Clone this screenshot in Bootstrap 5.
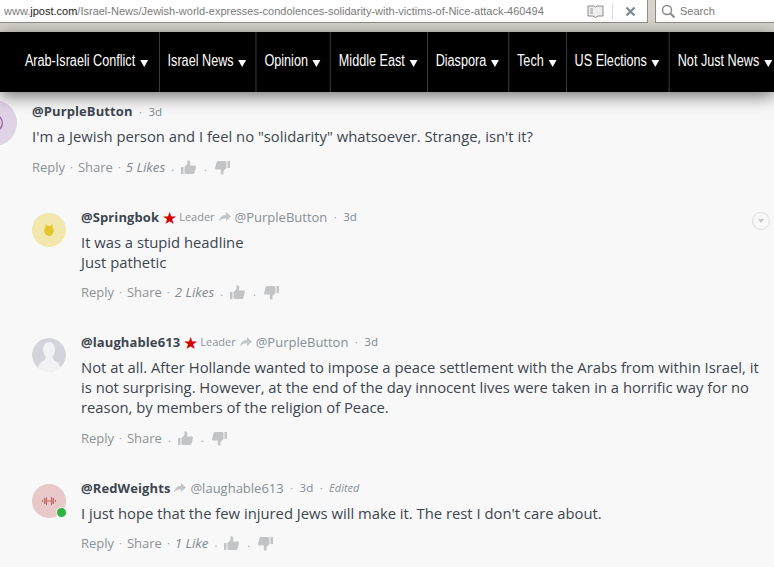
<!DOCTYPE html>
<html lang="en">
<head>
    <meta charset="UTF-8">
    <meta name="viewport" content="width=device-width, initial-scale=1.0">
    <title>Comments</title>
    <link href="https://cdn.jsdelivr.net/npm/bootstrap@5.3.2/dist/css/bootstrap.min.css" rel="stylesheet">
    <style>
        html, body { height: 567px; overflow: hidden; }
        body { background-color: #f8f8f8; font-family: "Open Sans", "Liberation Sans", sans-serif; color: #3c4650; }
        /* browser chrome */
        .chrome-bar { height: 32px; background-color: #d7d3cb; font-family: "Liberation Sans", sans-serif; font-size: 11px; color: #7b7b7b; }
        .url-box { width: 648px; height: 23px; background: #fff; border: 1px solid #8e8e8e; border-width: 0 1px 1px 0; padding-left: 4px; }
        .url-text { font-size: 11px; white-space: nowrap; }
        .url-text b { color: #222; font-weight: 400; }
        .url-sep { width: 1px; height: 16px; background: #dcdcdc; }
        .find-box { flex: 1; height: 23px; margin-left: 7px; background: #fff; border: 1px solid #8e8e8e; border-width: 0 0 1px 1px; padding-left: 5px; }
        /* site nav, no narrow face is installed so the row is squeezed as a whole */
        .site-nav { height: 60px; background: #000; padding-left: 17px; box-shadow: 0 4px 16px rgba(0,0,0,.55); position: relative; z-index: 2; overflow: hidden; }
        .site-row { height: 100%; width: 127%; flex: none; transform: scaleX(.79); transform-origin: left center; }
        .site-link { display: flex; align-items: center; height: 100%; padding: 0 12px 3px 10px; border-right: 1px solid #4a4a4a; color: #fff; text-decoration: none; font-family: "Liberation Sans", sans-serif; font-size: 16px; white-space: nowrap; }
        .site-link:first-child { padding-right: 14px; }
        .site-link:last-child { border-right: 0; }
        .site-link .caret-down { width: 0; height: 0; margin: 5px 0 0 6px; border-left: 5px solid transparent; border-right: 5px solid transparent; border-top: 7px solid #fff; }
        /* comments */
        .thread { padding-top: 9px; }
        .cmt { padding-left: 32px; padding-right: 4px; padding-bottom: 30px; }
        .cmt-top { padding-left: 0; }
        .cmt-top .cmt-actions { margin-top: 11px; }
        .cmt-long .cmt-actions { margin-top: 11px; }
        .avatar-round { width: 34px; height: 34px; border-radius: 50%; flex: none; margin-top: 6px; margin-right: 15px; position: relative; }
        .avatar-big { width: 46px; height: 46px; margin: -1px 15px 0 -29px; background: #e0d3e6; }
        .avatar-yellow { background: #f2e8ae; }
        .avatar-grey { overflow: hidden; }
        .avatar-red { background: #e8c8c8; }
        .online-dot { position: absolute; right: -1px; bottom: 0; width: 9px; height: 9px; border-radius: 50%; background: #33b13f; border: 1px solid #f8f8f8; box-sizing: content-box; }
        .cmt-head { height: 20px; line-height: 20px; font-size: 12px; color: #8a949c; white-space: nowrap; }
        .cmt-name { font-size: 13px; font-weight: 700; color: #3c4650; letter-spacing: .1px; }
        .cmt-parent { font-size: 13px; color: #858f96; }
        .cmt-leader { font-size: 11px; color: #8a9299; }
        .cmt-time { font-size: 11.5px; color: #7c8a96; }
        .cmt-edited { font-size: 11px; font-style: italic; color: #8a9299; }
        .cmt-star { color: #d40000; font-size: 17px; line-height: 1; margin: 0 2px 0 3px; }
        .cmt-body { margin-top: 5px; font-size: 14.8px; line-height: 20px; color: #3c4650; }
        .cmt-actions { margin-top: 10px; height: 20px; line-height: 20px; font-size: 13px; color: #8d9297; white-space: nowrap; }
        .cmt-likes { font-style: italic; color: #7f8a92; font-size: 13.3px; }
        .dot-sep { color: #9aa2a8; margin: 0 5px; font-size: 11px; }
        .cmt-head .dot-sep { margin: 0 6.5px; }
        .vote-sep { color: #9aa2a8; margin: 0 8px; font-size: 11px; }
        .vote-first { margin: 0 7px 0 6px; }
        .vote-icon { fill: #c2c4c6; }
        .collapse-btn { width: 18px; height: 18px; border: 1px solid #dedede; border-radius: 50%; margin: 5px 0 0 -18px; flex: none; display: flex; align-items: center; justify-content: center; }
        .collapse-btn span { width: 0; height: 0; border-left: 3.5px solid transparent; border-right: 3.5px solid transparent; border-top: 4px solid #c8c8c8; }
    </style>
</head>
<body>
    <div class="chrome-bar d-flex align-items-start">
        <div class="url-box d-flex align-items-center">
            <span class="url-text flex-grow-1">www.<b>jpost.com</b>/Israel-News/Jewish-world-expresses-condolences-solidarity-with-victims-of-Nice-attack-460494</span>
            <svg width="17" height="13" viewBox="0 0 17 13" class="me-2"><path d="M1 1h6l1.500 1L10 1h6v10h-5l-2.500 1.500L6 11H1z" fill="#eee" stroke="#8a8a8a"/><path d="M3 4h3M3 6h3M3 8h3" stroke="#9a9a9a"/></svg>
            <span class="url-sep"></span>
            <svg width="11" height="11" viewBox="0 0 11 11" style="margin:0 11px 0 12px"><path d="M1.500 1.500l8 8M9.500 1.500l-8 8" stroke="#7d8994" stroke-width="2.200"/></svg>
        </div>
        <div class="find-box d-flex align-items-center gap-1">
            <svg width="15" height="15" viewBox="0 0 15 15"><circle cx="6" cy="6" r="4.500" fill="#fff" stroke="#8a8a8a" stroke-width="1.500"/><path d="M9.500 9.500l4 4" stroke="#8a8a8a" stroke-width="2"/></svg>
            <span class="url-text">Search</span>
        </div>
    </div>

    <nav class="site-nav d-flex">
        <div class="site-row d-flex">
            <a class="site-link" href="#">Arab-Israeli Conflict<span class="caret-down"></span></a>
            <a class="site-link" href="#">Israel News<span class="caret-down"></span></a>
            <a class="site-link" href="#">Opinion<span class="caret-down"></span></a>
            <a class="site-link" href="#">Middle East<span class="caret-down"></span></a>
            <a class="site-link" href="#">Diaspora<span class="caret-down"></span></a>
            <a class="site-link" href="#">Tech<span class="caret-down"></span></a>
            <a class="site-link" href="#">US Elections<span class="caret-down"></span></a>
            <a class="site-link" href="#">Not Just News<span class="caret-down"></span></a>
        </div>
    </nav>

    <svg width="0" height="0" class="position-absolute">
        <symbol id="thumb-up" viewBox="0 0 15 15"><path d="M0 7h2.500v7H0zM3.500 7l3-3V.5c1.700-.6 3 .5 2.800 2.300L9 5.500h4.800c1 0 1.400 1 1.100 1.800l-1.500 5.700c-.2.600-.7 1-1.400 1H5.500c-1 0-2-.5-2-1z"/></symbol>
        <symbol id="thumb-down" viewBox="0 0 15 15"><path d="M15 8h-2.500V1H15zM11.500 8l-3 3v3.500c-1.700.6-3-.5-2.800-2.300L6 9.500H1.200c-1 0-1.400-1-1.100-1.800L1.600 2C1.800 1.400 2.300 1 3 1h6.500c1 0 2 .5 2 1z"/></symbol>
        <symbol id="reply-arrow" viewBox="0 0 12 10"><path d="M7 0l5 4.500L7 9V6.200C4 6.200 2 7 0 9.500 .7 5.500 3 3 7 2.800z" fill="#c3c6c9"/></symbol>
    </svg>

    <main class="thread">
        <div class="cmt cmt-top d-flex">
            <div class="avatar-round avatar-big d-flex align-items-center justify-content-center">
                <svg width="20" height="20" viewBox="0 0 24 24"><circle cx="12" cy="12" r="10" fill="none" stroke="#9a78ae" stroke-width="2"/><circle cx="12" cy="12" r="6" fill="#a98abb" stroke="#8e6aa3"/></svg>
            </div>
            <div class="flex-grow-1">
                <div class="cmt-head"><span class="cmt-name">@PurpleButton</span><span class="dot-sep">·</span><span class="cmt-time">3d</span></div>
                <div class="cmt-body">I'm a Jewish person and I feel no "solidarity" whatsoever. Strange, isn't it?</div>
                <div class="cmt-actions d-flex align-items-center">Reply<span class="dot-sep">·</span>Share<span class="dot-sep">·</span><span class="cmt-likes">5 Likes</span><span class="vote-sep vote-first">.</span><svg class="vote-icon" width="15" height="15"><use href="#thumb-up"/></svg><span class="vote-sep">.</span><svg class="vote-icon" width="15" height="15"><use href="#thumb-down"/></svg></div>
            </div>
        </div>

        <div class="cmt d-flex">
            <div class="avatar-round avatar-yellow d-flex align-items-center justify-content-center">
                <svg width="12" height="14" viewBox="0 0 12 14"><path d="M2.500 1l2 2h3l2-2v3.500c2 1.500 1.500 5-.5 7l-3 2-3-2C1 9.500.5 6 2.500 4.500z" fill="#e2c62c"/></svg>
            </div>
            <div class="flex-grow-1">
                <div class="cmt-head d-flex align-items-center"><span class="cmt-name">@Springbok</span><span class="cmt-star">★</span><span class="cmt-leader">Leader</span><svg class="mx-1" width="12" height="10"><use href="#reply-arrow"/></svg><span class="cmt-parent">@PurpleButton</span><span class="dot-sep">·</span><span class="cmt-time">3d</span></div>
                <div class="cmt-body">It was a stupid headline<br>Just pathetic</div>
                <div class="cmt-actions d-flex align-items-center">Reply<span class="dot-sep">·</span>Share<span class="dot-sep">·</span><span class="cmt-likes">2 Likes</span><span class="vote-sep vote-first">.</span><svg class="vote-icon" width="15" height="15"><use href="#thumb-up"/></svg><span class="vote-sep">.</span><svg class="vote-icon" width="15" height="15"><use href="#thumb-down"/></svg></div>
            </div>
            <div class="collapse-btn"><span></span></div>
        </div>

        <div class="cmt cmt-long d-flex">
            <div class="avatar-round avatar-grey">
                <svg width="34" height="34" viewBox="0 0 34 34"><circle cx="17" cy="17" r="17" fill="#d3d4d9"/><path d="M17 4c4 0 6 3.500 6 7.500 0 3.500-1.500 6-2.500 7.500 0 2 1 3 4 4.500 2 1 3.500 3.500 4 6.500l-2 4.500H8l-2-4.500c.5-3 2-5.500 4-6.500 3-1.500 4-2.500 4-4.500-1-1.500-3-4-3-7.500C11 7.500 13 4 17 4z" fill="#f2f2f4"/></svg>
            </div>
            <div class="flex-grow-1">
                <div class="cmt-head d-flex align-items-center"><span class="cmt-name">@laughable613</span><span class="cmt-star">★</span><span class="cmt-leader">Leader</span><svg class="mx-1" width="12" height="10"><use href="#reply-arrow"/></svg><span class="cmt-parent">@PurpleButton</span><span class="dot-sep">·</span><span class="cmt-time">3d</span></div>
                <div class="cmt-body">Not at all. After Hollande wanted to impose a peace settlement with the Arabs from within Israel, it is not surprising. However, at the end of the day innocent lives were taken in a horrific way for no reason, by members of the religion of Peace.</div>
                <div class="cmt-actions d-flex align-items-center">Reply<span class="dot-sep">·</span>Share<span class="vote-sep vote-first">.</span><svg class="vote-icon" width="15" height="15"><use href="#thumb-up"/></svg><span class="vote-sep">.</span><svg class="vote-icon" width="15" height="15"><use href="#thumb-down"/></svg></div>
            </div>
        </div>

        <div class="cmt d-flex">
            <div class="avatar-round avatar-red d-flex align-items-center justify-content-center">
                <svg width="14" height="8" viewBox="0 0 14 8"><path d="M0 3h1v2H0zM2 1h1.500v6H2zM4 0h1v8H4zM5 3.500h4v1H5zM9 0h1v8H9zM10.500 1H12v6h-1.500zM13 3h1v2h-1z" fill="#c26666"/></svg>
                <span class="online-dot"></span>
            </div>
            <div class="flex-grow-1">
                <div class="cmt-head d-flex align-items-center"><span class="cmt-name">@RedWeights</span><svg class="mx-1" width="12" height="10"><use href="#reply-arrow"/></svg><span class="cmt-parent">@laughable613</span><span class="dot-sep">·</span><span class="cmt-time">3d</span><span class="dot-sep">·</span><span class="cmt-edited">Edited</span></div>
                <div class="cmt-body">I just hope that the few injured Jews will make it. The rest I don't care about.</div>
                <div class="cmt-actions d-flex align-items-center">Reply<span class="dot-sep">·</span>Share<span class="dot-sep">·</span><span class="cmt-likes">1 Like</span><span class="vote-sep vote-first">.</span><svg class="vote-icon" width="15" height="15"><use href="#thumb-up"/></svg><span class="vote-sep">.</span><svg class="vote-icon" width="15" height="15"><use href="#thumb-down"/></svg></div>
            </div>
        </div>
    </main>

    <script src="https://cdn.jsdelivr.net/npm/bootstrap@5.3.0/dist/js/bootstrap.bundle.min.js"></script>
</body>
</html>
